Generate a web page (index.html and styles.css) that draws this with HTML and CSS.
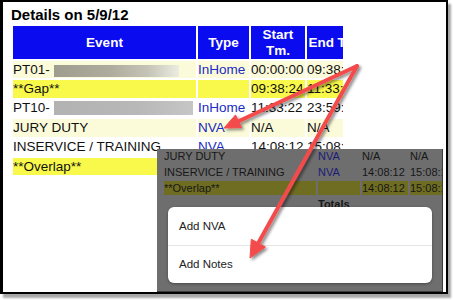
FILE: index.html
```html
<!DOCTYPE html>
<html>
<head>
<meta charset="utf-8">
<link rel="stylesheet" href="styles.css">
</head>
<body>
<div class="frame">
  <h1 class="title">Details on 5/9/12</h1>
  <div class="table-clip">
    <table class="details">
      <colgroup><col class="c-event"><col class="c-type"><col class="c-start"><col class="c-end"></colgroup>
      <thead>
        <tr><th>Event</th><th>Type</th><th>Start<br>Tm.</th><th>End Tm.</th></tr>
      </thead>
      <tbody>
        <tr class="light"><td>PT01-<span class="redact r1"></span></td><td class="type">InHome</td><td>00:00:00</td><td>09:38:24</td></tr>
        <tr class="gap"><td>**Gap**</td><td></td><td>09:38:24</td><td>11:33:22</td></tr>
        <tr class="white"><td>PT10-<span class="redact r2"></span></td><td class="type">InHome</td><td>11:33:22</td><td>23:59:59</td></tr>
        <tr class="light"><td>JURY DUTY</td><td class="type">NVA</td><td>N/A</td><td>N/A</td></tr>
        <tr class="white"><td>INSERVICE / TRAINING</td><td class="type">NVA</td><td>14:08:12</td><td>15:08:12</td></tr>
        <tr class="gap"><td>**Overlap**</td><td></td><td>14:08:12</td><td>15:08:12</td></tr>
      </tbody>
    </table>
  </div>

  <div class="dim">
    <table class="dim-table">
      <colgroup><col class="d-event"><col class="d-type"><col class="d-start"><col class="d-end"></colgroup>
      <tbody>
        <tr><td>JURY DUTY</td><td class="type">NVA</td><td>N/A</td><td>N/A</td></tr>
        <tr><td>INSERVICE / TRAINING</td><td class="type">NVA</td><td>14:08:12</td><td>15:08:12</td></tr>
        <tr class="olive"><td>**Overlap**</td><td></td><td>14:08:12</td><td>15:08:12</td></tr>
        <tr><td></td><td class="totals">Totals</td><td></td><td></td></tr>
      </tbody>
    </table>
    <div class="sheet">
      <div class="sheet-item first">Add NVA</div>
      <div class="sheet-item">Add Notes</div>
    </div>
  </div>
</div>

<svg class="arrows" width="453" height="300" viewBox="0 0 453 300">
  <defs>
    <filter id="sh" x="-20%" y="-20%" width="140%" height="140%">
      <feDropShadow dx="2" dy="2" stdDeviation="1.5" flood-color="#000" flood-opacity="0.45"/>
    </filter>
  </defs>
  <g filter="url(#sh)" fill="#f34c4c" stroke="#f34c4c" stroke-linejoin="round">
    <line x1="357" y1="66" x2="238" y2="121.5" stroke-width="4" stroke-linecap="round"/>
    <polygon points="224,128 235.5,114.9 241.5,127.5" stroke-width="1"/>
    <line x1="357" y1="66" x2="258.3" y2="243" stroke-width="4" stroke-linecap="round"/>
    <polygon points="250,258 251.3,239.2 265.3,247" stroke-width="1"/>
  </g>
</svg>
</body>
</html>
```

FILE: styles.css
```css
html, body {
  margin: 0;
  padding: 0;
  background: #ffffff;
}

body {
  position: relative;
  width: 453px;
  height: 300px;
  overflow: hidden;
  font-family: "Liberation Sans", Arial, sans-serif;
  color: #111111;
}

.frame {
  position: relative;
  box-sizing: border-box;
  width: 448px;
  height: 294px;
  border-style: solid;
  border-color: #000000;
  border-width: 2px 2px 2px 3px;
  padding: 4px 0 0 10px;
  background: #ffffff;
  box-shadow: 3px 4px 2px rgba(0, 0, 0, 0.35);
  overflow: hidden;
}

.title {
  margin: 0 0 2px -2px;
  font-size: 15px;
  line-height: 18px;
  font-weight: bold;
  color: #000000;
}

.table-clip {
  width: 330px;
  overflow: hidden;
}

.details {
  margin: -2px 0 0 -2px;
  border-collapse: separate;
  border-spacing: 2px;
  table-layout: fixed;
  width: 354px;
  font-size: 13.5px;
}

.c-event { width: 183px; }
.c-type { width: 51px; }
.c-start { width: 54px; }
.c-end { width: 56px; }

.details th {
  height: 33px;
  padding: 0;
  background: #0b0bf0;
  color: #ffffff;
  font-weight: bold;
  line-height: 16px;
  text-align: center;
  vertical-align: middle;
  white-space: nowrap;
}

.details td {
  height: 17.4px;
  padding: 0;
  line-height: 16px;
  vertical-align: middle;
  white-space: nowrap;
  overflow: hidden;
}

.details .light td { background: #fbfbda; }
.details .gap td { background: #f9f94c; }
.details .white td { background: #ffffff; }

.details .type { color: #1a2cc4; }

.redact {
  display: inline-block;
  margin-left: 4px;
  vertical-align: -3px;
}

.r1 {
  width: 125px;
  height: 12px;
  background: linear-gradient(to right, #9e9d8f 0%, #adac9d 45%, #c4c3b6 75%, #ecece2 100%);
}

.r2 {
  width: 139px;
  height: 14px;
  background: linear-gradient(to right, #b2b2b2 0%, #b8b8b8 60%, #c6c6c6 100%);
}

.dim {
  position: absolute;
  left: 154px;
  top: 147px;
  right: 3px;
  bottom: 0;
  background: #6e6e6e;
  border-right: 1px solid #3a3a3a;
  border-bottom: 1px solid #3a3a3a;
  overflow: hidden;
}

.dim-table {
  margin: -2px 0 0 5px;
  border-collapse: separate;
  border-spacing: 2px;
  table-layout: fixed;
  width: 294px;
  font-size: 11px;
  color: #171717;
}

.d-event { width: 152px; }
.d-type { width: 42px; }
.d-start { width: 46px; }
.d-end { width: 46px; }

.dim-table td {
  height: 14px;
  padding: 0;
  line-height: 14px;
  vertical-align: middle;
  white-space: nowrap;
  overflow: hidden;
}

.dim-table .type { color: #1c1c78; }
.dim-table .olive td { background: #6f6d22; }
.dim-table .totals { font-weight: bold; }

.sheet {
  position: absolute;
  left: 11px;
  top: 58px;
  width: 264px;
  height: 76px;
  background: #ffffff;
  border-radius: 6px;
  box-shadow: 0 1px 3px rgba(0, 0, 0, 0.35);
  overflow: hidden;
}

.sheet-item {
  height: 37px;
  padding-left: 11px;
  line-height: 37px;
  font-size: 11.5px;
  color: #222222;
}

.sheet-item.first {
  height: 38px;
  line-height: 38px;
  border-bottom: 1px solid #e4e4e4;
}

.arrows {
  position: absolute;
  left: 0;
  top: 0;
  pointer-events: none;
}
```
